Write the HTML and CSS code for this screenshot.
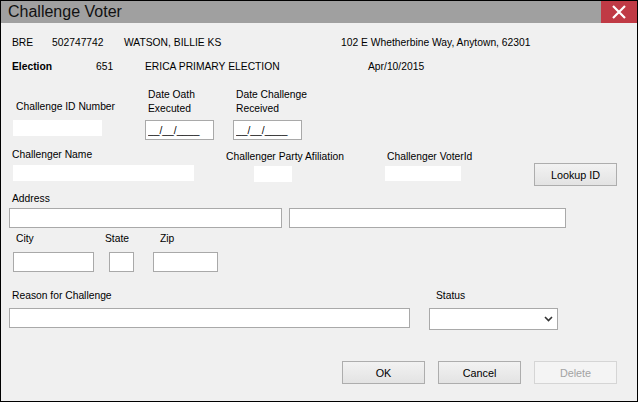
FILE: index.html
```html
<!DOCTYPE html>
<html lang="en">
<head>
  <meta charset="UTF-8" />
  <title>Challenge Voter</title>
  <link rel="stylesheet" href="styles.css">
</head>
<body>

<div class="window">
  <div class="titlebar">
    <span class="title">Challenge Voter</span>
    <div class="close">
      <svg width="14" height="14" viewBox="0 0 14 14">
        <path d="M1 1 L13 13 M13 1 L1 13" stroke="#fff" stroke-width="2.2" fill="none"/>
      </svg>
    </div>
  </div>

  <div class="content">
    <div class="info">
      <span class="c-bre">BRE</span>
      <span class="c-id">502747742</span>
      <span class="c-name">WATSON, BILLIE KS</span>
      <span>102 E Whetherbine Way, Anytown, 62301</span>
    </div>
    <div class="info info-2">
      <span class="c-elect"><b>Election</b></span>
      <span class="c-num">651</span>
      <span class="c-ename">ERICA PRIMARY ELECTION</span>
      <span>Apr/10/2015</span>
    </div>

    <div class="row row-dates">
      <div class="field f-chid">
        <label class="lbl">Challenge ID Number</label>
        <input class="plain" type="text">
      </div>
      <div class="field f-oath">
        <label class="lbl">Date Oath<br>Executed</label>
        <input class="box date" type="text" value="__/__/____">
      </div>
      <div class="field f-recv">
        <label class="lbl">Date Challenge<br>Received</label>
        <input class="box date" type="text" value="__/__/____">
      </div>
    </div>

    <div class="row row-chal">
      <div class="field f-cname">
        <label class="lbl">Challenger Name</label>
        <input class="plain" type="text">
      </div>
      <div class="field f-party">
        <label class="lbl">Challenger Party Afiliation</label>
        <input class="plain" type="text">
      </div>
      <div class="field f-voter">
        <label class="lbl">Challenger VoterId</label>
        <input class="plain" type="text">
      </div>
      <button class="btn btn-lookup">Lookup ID</button>
    </div>

    <div class="row row-addr">
      <div class="field f-addr">
        <label class="lbl">Address</label>
        <div class="addr-inputs">
          <input class="box addr1" type="text">
          <input class="box addr2" type="text">
        </div>
      </div>
    </div>

    <div class="row row-city">
      <div class="field f-city">
        <label class="lbl">City</label>
        <input class="box" type="text">
      </div>
      <div class="field f-state">
        <label class="lbl">State</label>
        <input class="box" type="text">
      </div>
      <div class="field f-zip">
        <label class="lbl">Zip</label>
        <input class="box" type="text">
      </div>
    </div>

    <div class="row row-reason">
      <div class="field f-reason">
        <label class="lbl">Reason for Challenge</label>
        <input class="box" type="text">
      </div>
      <div class="field f-status">
        <label class="lbl">Status</label>
        <div class="select">
          <svg width="9" height="6" viewBox="0 0 9 6">
            <path d="M1 1 L4.5 4.5 L8 1" stroke="#333" stroke-width="1.6" fill="none"/>
          </svg>
        </div>
      </div>
    </div>

    <div class="row row-buttons">
      <button class="btn">OK</button>
      <button class="btn">Cancel</button>
      <button class="btn btn-disabled">Delete</button>
    </div>
  </div>
</div>

</body>
</html>
```

FILE: styles.css
```css
* {
  margin: 0;
  padding: 0;
  box-sizing: border-box;
}

body {
  font-family: 'Liberation Sans', Arial, sans-serif;
  font-size: 10.3px;
  color: #000;
  background: #f0f0f0;
}

.window {
  width: 638px;
  height: 402px;
  border: 1px solid #000;
  background: #f0f0f0;
  overflow: hidden;
}

.titlebar {
  display: flex;
  height: 22px;
  background: #a0a0a0;
}

.title {
  padding-left: 7px;
  font-size: 16px;
  line-height: 22px;
  color: #111;
}

.close {
  margin-left: auto;
  width: 36px;
  height: 22px;
  background: #c03a45;
  display: flex;
  justify-content: center;
  align-items: center;
}

/* header info lines */
.info {
  display: flex;
  margin-top: 14px;
  line-height: 12px;
  white-space: nowrap;
}

.info-2 {
  margin-top: 12px;
}

.c-bre { margin-left: 11px; width: 40px; }
.c-id { width: 72px; }
.c-name { width: 217px; }
.c-elect { margin-left: 11px; width: 84px; }
.c-num { width: 49px; }
.c-ename { width: 223px; }

/* form rows */
.row {
  display: flex;
  align-items: flex-start;
}

.field {
  display: flex;
  flex-direction: column;
}

.lbl {
  display: block;
  line-height: 14px;
  white-space: nowrap;
}

input {
  font-family: inherit;
  font-size: inherit;
  color: #000;
  outline: none;
}

.plain {
  border: none;
  background: #fff;
  height: 16px;
}

.box {
  border: 1px solid #a9a9a9;
  background: #fff;
  height: 20px;
}

.date {
  padding-left: 2px;
}

.row-dates { margin-top: 15px; }

.f-chid { margin-left: 12px; width: 89px; }
.f-chid .lbl { margin-top: 12px; padding-left: 3px; }
.f-chid input { margin-top: 6px; }

.f-oath { margin-left: 43px; width: 69px; }
.f-recv { margin-left: 19px; width: 69px; }
.f-oath .lbl, .f-recv .lbl { padding-left: 3px; }
.f-oath input, .f-recv input { margin-top: 4px; }

.row-chal { margin-top: 8px; }

.f-cname { margin-left: 11px; width: 182px; }
.f-cname input { margin-top: 3px; margin-left: 1px; width: 181px; }

.f-party { margin-left: 32px; width: 125px; }
.f-party .lbl { margin-top: 2px; }
.f-party input { margin-top: 2px; margin-left: 28px; width: 38px; }

.f-voter { margin-left: 34px; width: 90px; }
.f-voter .lbl { margin-top: 2px; padding-left: 2px; }
.f-voter input { margin-top: 2px; width: 76px; height: 15px; }

.btn {
  width: 83px;
  height: 23px;
  border: 1px solid #adadad;
  background: linear-gradient(#f2f2f2, #e3e3e3);
  font-family: inherit;
  font-size: 10.8px;
  color: #000;
}

.btn-lookup {
  margin-top: 15px;
  margin-left: 59px;
}

.btn-disabled {
  border-color: #d5d5d5;
  background: #f4f4f4;
  color: #a3a3a3;
}

.row-addr { margin-top: 6px; }

.f-addr { margin-left: 8px; }
.f-addr .lbl { padding-left: 3px; }

.addr-inputs {
  display: flex;
  gap: 7px;
  margin-top: 2px;
}

.addr1 { width: 273px; }
.addr2 { width: 277px; }

.row-city { margin-top: 4px; }
.row-city input { margin-top: 6px; }

.f-city { margin-left: 12px; width: 81px; }
.f-city .lbl { padding-left: 3px; }

.f-state { margin-left: 15px; width: 25px; }
.f-state .lbl { margin-left: -4px; }

.f-zip { margin-left: 19px; width: 65px; }
.f-zip .lbl { padding-left: 7px; }

.row-reason { margin-top: 17px; }

.f-reason { margin-left: 8px; width: 401px; }
.f-reason .lbl { padding-left: 3px; }
.f-reason input { margin-top: 5px; }

.f-status { margin-left: 19px; width: 129px; }
.f-status .lbl { padding-left: 7px; }

.select {
  margin-top: 5px;
  height: 22px;
  border: 1px solid #a9a9a9;
  background: #fff;
  display: flex;
  justify-content: flex-end;
  align-items: center;
  padding-right: 4px;
}

.row-buttons {
  margin-top: 31px;
  margin-left: 341px;
  gap: 13px;
}
```
